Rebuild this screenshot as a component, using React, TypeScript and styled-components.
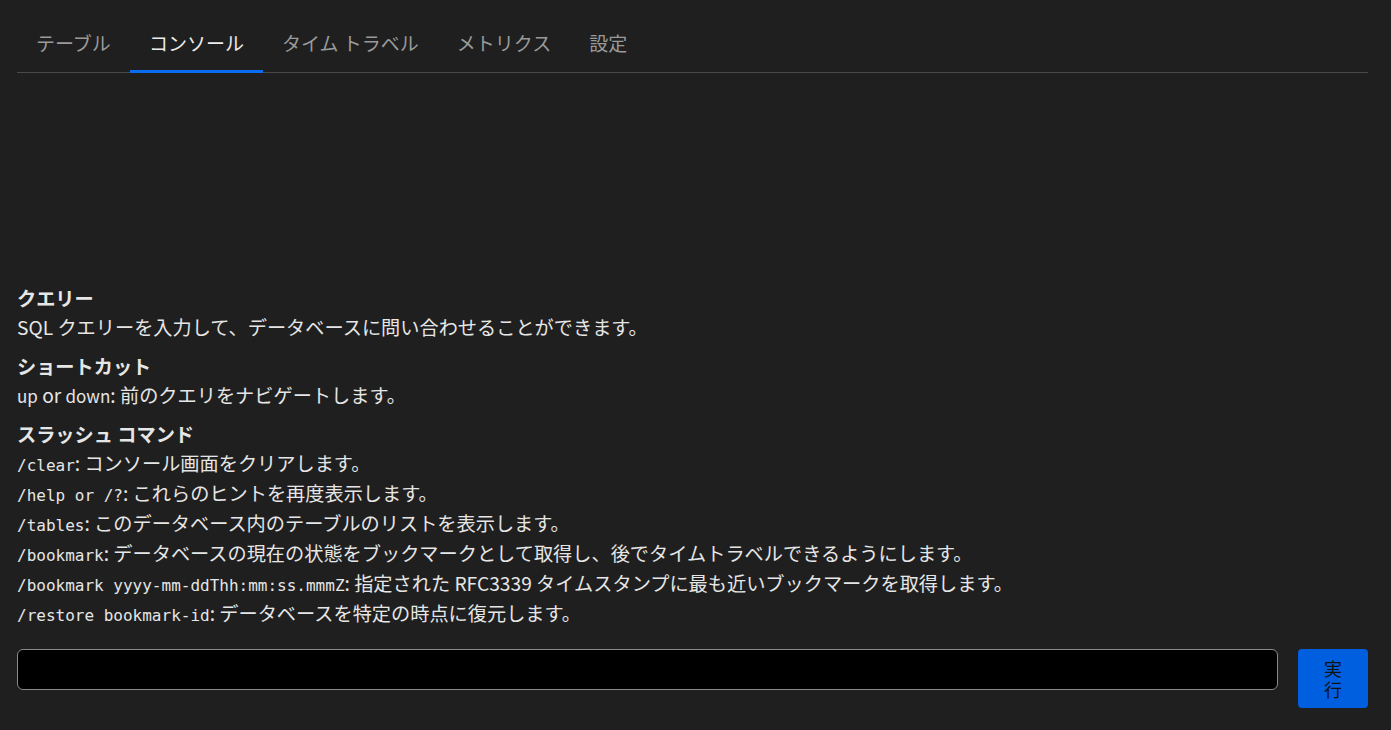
import React from "react";
import styled, { createGlobalStyle } from "styled-components";

const Global = createGlobalStyle`
  html, body { margin: 0; padding: 0; background: #1f1f1f; }
  body { font-family: "Noto Sans CJK JP", "Noto Sans", sans-serif; color: #e6e6e6; }
`;

const Page = styled.div`
  height: 100vh;
  box-sizing: border-box;
  padding: 0 23px 22px 17px;
  display: flex;
  flex-direction: column;
`;

const TabBar = styled.div`
  display: flex;
  border-bottom: 1px solid #4a4a4a;
  padding-top: 14px;
`;

const Tab = styled.div<{ $active?: boolean }>`
  padding: 0 19px;
  height: 59px;
  display: flex;
  align-items: center;
  font-size: 19px;
  color: ${(p) => (p.$active ? "#ececec" : "#9a9a9a")};
  border-bottom: 3px solid ${(p) => (p.$active ? "#0a6cf0" : "transparent")};
  margin-bottom: -1px;
  box-sizing: border-box;
`;

const Console = styled.div`
  flex: 1;
  display: flex;
  flex-direction: column;
  justify-content: flex-end;
  padding-bottom: 21px;
  font-size: 19.2px;
`;

const Heading = styled.div`
  font-weight: bold;
  line-height: 28px;
  margin-top: 10px;
  &:first-child { margin-top: 0; }
`;

const Line = styled.div`
  line-height: 30px;
  height: 30px;
`;

const Code = styled.code`
  font-family: "DejaVu Sans Mono", "Liberation Mono", monospace;
  font-size: 16px;
  line-height: 1;
`;

const Key = styled.span`
  font-size: 17px;
  line-height: 1;
`;

const InputRow = styled.div`
  display: flex;
  gap: 20px;
  align-items: flex-start;
`;

const Input = styled.input`
  flex: 1;
  height: 41px;
  box-sizing: border-box;
  background: #000;
  border: 1px solid #8a8a8a;
  border-radius: 6px;
  color: #eee;
  font-size: 16px;
  padding: 0 10px;
  outline: none;
`;

const RunButton = styled.button`
  width: 70px;
  height: 59px;
  background: #005fdf;
  border: none;
  border-radius: 4px;
  color: #111;
  font-family: "Noto Sans CJK JP", sans-serif;
  font-size: 18px;
  line-height: 21px;
  padding: 0 24px;
  word-break: break-all;
`;

const tabs = ["テーブル", "コンソール", "タイム トラベル", "メトリクス", "設定"];

export default function App() {
  return (
    <>
      <Global />
      <Page>
        <TabBar>
          {tabs.map((t, i) => (
            <Tab key={t} $active={i === 1}>
              {t}
            </Tab>
          ))}
        </TabBar>
        <Console>
          <Heading>クエリー</Heading>
          <Line>SQL クエリーを入力して、データベースに問い合わせることができます。</Line>
          <Heading>ショートカット</Heading>
          <Line>
            <Key>up</Key> or <Key>down</Key>: 前のクエリをナビゲートします。
          </Line>
          <Heading>スラッシュ コマンド</Heading>
          <Line>
            <Code>/clear</Code>: コンソール画面をクリアします。
          </Line>
          <Line>
            <Code>/help or /?</Code>: これらのヒントを再度表示します。
          </Line>
          <Line>
            <Code>/tables</Code>: このデータベース内のテーブルのリストを表示します。
          </Line>
          <Line>
            <Code>/bookmark</Code>: データベースの現在の状態をブックマークとして取得し、後でタイムトラベルできるようにします。
          </Line>
          <Line>
            <Code>/bookmark yyyy-mm-ddThh:mm:ss.mmmZ</Code>: 指定された RFC3339 タイムスタンプに最も近いブックマークを取得します。
          </Line>
          <Line>
            <Code>/restore bookmark-id</Code>: データベースを特定の時点に復元します。
          </Line>
        </Console>
        <InputRow>
          <Input />
          <RunButton>実行</RunButton>
        </InputRow>
      </Page>
    </>
  );
}
